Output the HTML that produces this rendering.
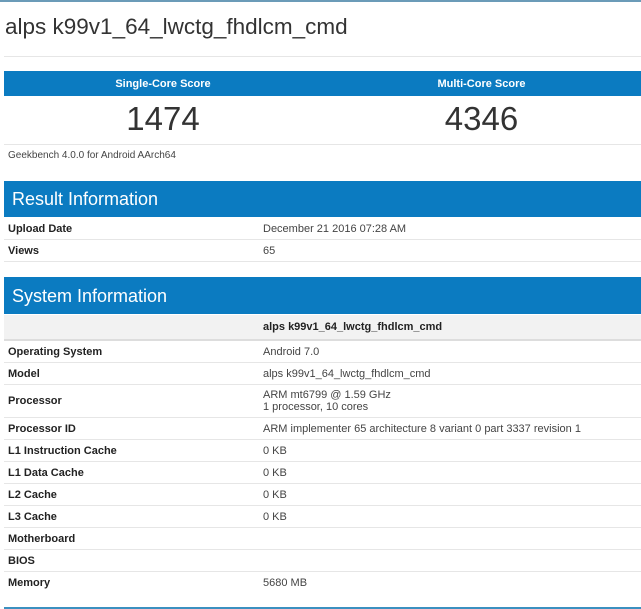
<!DOCTYPE html>
<html><head><meta charset="utf-8"><style>
body{margin:0;width:641px;height:609px;background:#fff;font-family:"Liberation Sans",sans-serif;position:relative;overflow:hidden;color:#333}
.a{position:absolute}
.top{left:0;top:0;width:641px;height:2px;background:#6b9bb8}
h1{position:absolute;left:5px;top:14px;margin:0;font-weight:normal;font-size:22.5px;color:#333}
.bar{position:absolute;left:4px;width:637px;background:#0b7bc1;color:#fff}
.hr{position:absolute;left:4px;width:637px;height:1px;background:#e6e6e6}
.row{position:absolute;left:4px;width:637px;font-size:11px;border-bottom:1px solid #e6e6e6}
.row .l{position:absolute;left:4px;font-weight:bold;color:#222}
.row .v{position:absolute;left:259px;color:#444}
</style></head><body>
<div class="a top"></div>
<h1>alps k99v1_64_lwctg_fhdlcm_cmd</h1>
<div class="hr" style="top:56px"></div>
<div class="bar" style="top:71px;height:25px;font-size:11px;font-weight:bold">
<span class="a" style="left:0;width:318px;text-align:center;top:7px">Single-Core Score</span>
<span class="a" style="left:318px;width:319px;text-align:center;top:7px">Multi-Core Score</span></div>
<div class="a" style="left:4px;width:318px;text-align:center;top:100px;font-size:33px;color:#333">1474</div>
<div class="a" style="left:322px;width:319px;text-align:center;top:100px;font-size:33px;color:#333">4346</div>
<div class="hr" style="top:144px"></div>
<div class="a" style="left:8px;top:150px;font-size:10px;color:#444">Geekbench 4.0.0 for Android AArch64</div>
<div class="bar" style="top:181px;height:36px;font-size:18px"><span class="a" style="left:8px;top:8px">Result Information</span></div>
<div class="row" style="top:218px;height:21px"><span class="l" style="top:5px">Upload Date</span><span class="v" style="top:5px">December 21 2016 07:28 AM</span></div>
<div class="row" style="top:240px;height:21px"><span class="l" style="top:5px">Views</span><span class="v" style="top:5px">65</span></div>
<div class="bar" style="top:277px;height:37px;font-size:18px"><span class="a" style="left:8px;top:9px">System Information</span></div>
<div class="row" style="top:315px;height:24px;background:#f2f2f2;border-bottom:2px solid #ddd"><span class="v" style="top:6px;font-weight:bold;color:#222">alps k99v1_64_lwctg_fhdlcm_cmd</span></div>
<div class="row" style="top:341px;height:21px"><span class="l" style="top:5px">Operating System</span><span class="v" style="top:5px">Android 7.0</span></div>
<div class="row" style="top:363px;height:21px"><span class="l" style="top:5px">Model</span><span class="v" style="top:5px">alps k99v1_64_lwctg_fhdlcm_cmd</span></div>
<div class="row" style="top:385px;height:32px"><span class="l" style="top:10px">Processor</span><span class="v" style="top:4px;line-height:12px">ARM mt6799 @ 1.59 GHz<br>1 processor, 10 cores</span></div>
<div class="row" style="top:418px;height:21px"><span class="l" style="top:5px">Processor ID</span><span class="v" style="top:5px">ARM implementer 65 architecture 8 variant 0 part 3337 revision 1</span></div>
<div class="row" style="top:440px;height:21px"><span class="l" style="top:5px">L1 Instruction Cache</span><span class="v" style="top:5px">0 KB</span></div>
<div class="row" style="top:462px;height:21px"><span class="l" style="top:5px">L1 Data Cache</span><span class="v" style="top:5px">0 KB</span></div>
<div class="row" style="top:484px;height:21px"><span class="l" style="top:5px">L2 Cache</span><span class="v" style="top:5px">0 KB</span></div>
<div class="row" style="top:506px;height:21px"><span class="l" style="top:5px">L3 Cache</span><span class="v" style="top:5px">0 KB</span></div>
<div class="row" style="top:528px;height:21px"><span class="l" style="top:5px">Motherboard</span></div>
<div class="row" style="top:550px;height:21px"><span class="l" style="top:5px">BIOS</span></div>
<div class="row" style="top:572px;height:21px;border:none"><span class="l" style="top:5px">Memory</span><span class="v" style="top:5px">5680 MB</span></div>
<div class="a" style="left:4px;top:607px;width:637px;height:2px;background:#3b90c0"></div>
</body></html>
